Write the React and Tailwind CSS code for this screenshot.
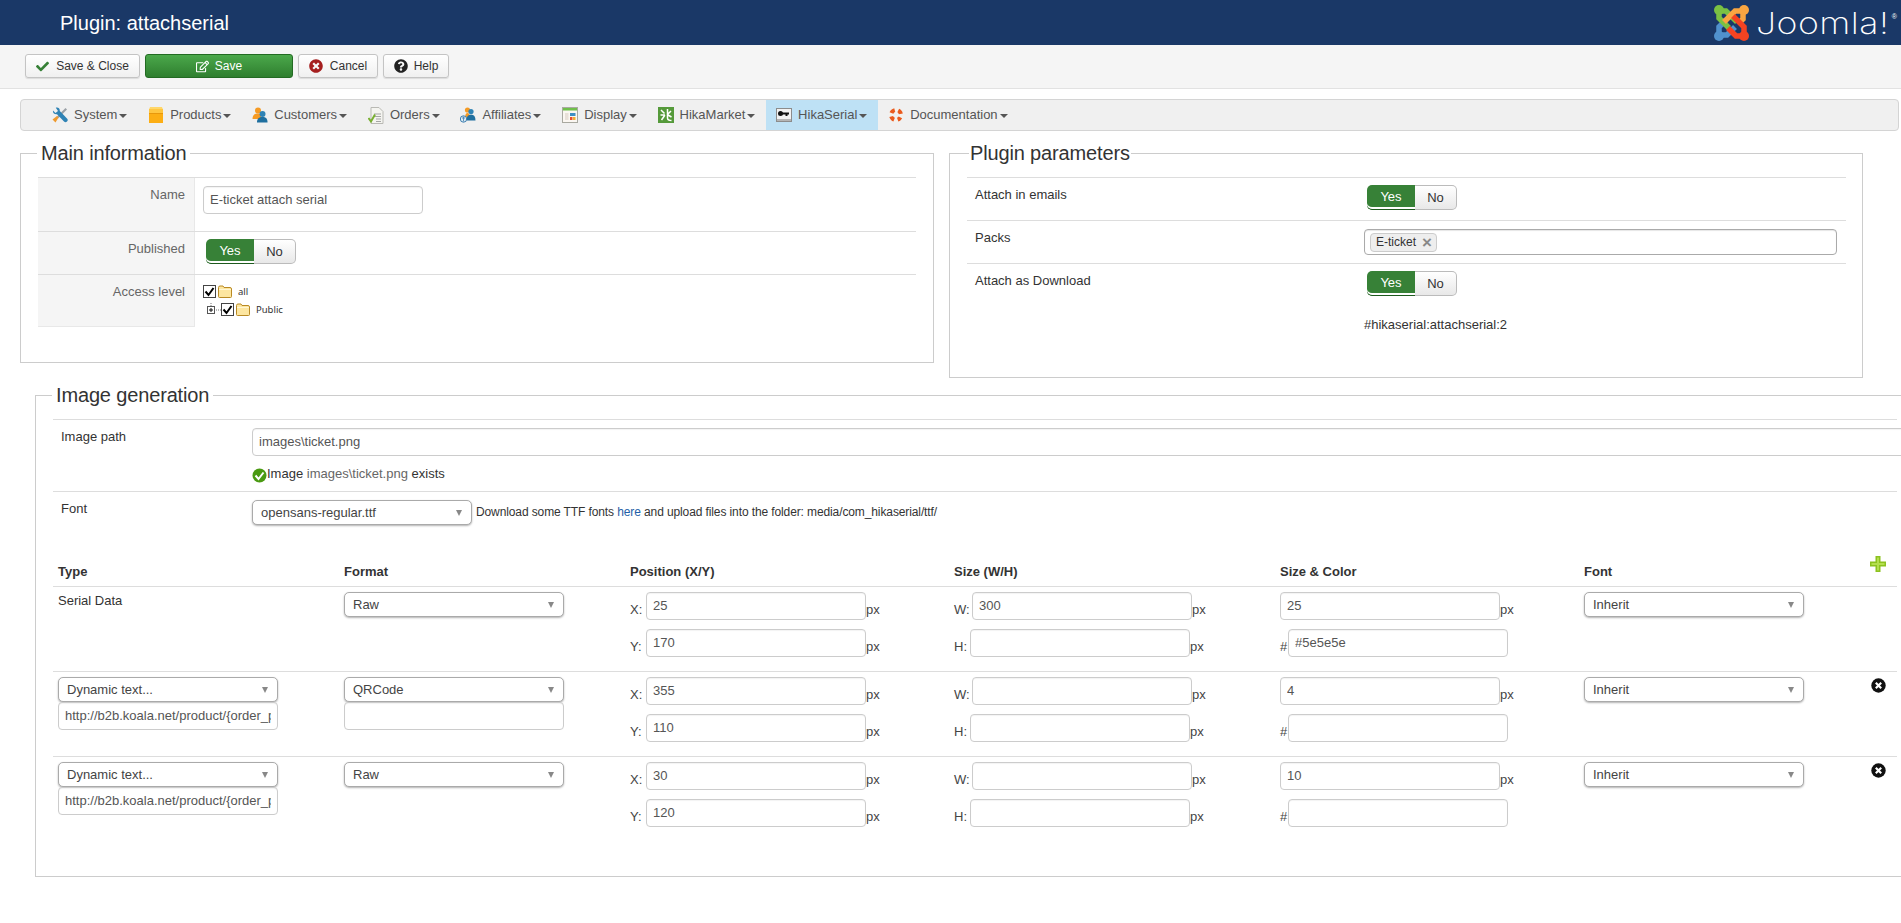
import React from 'react';
import { FaCheck, FaRegEdit, FaTimesCircle, FaQuestionCircle } from 'react-icons/fa';

const ToolsIcon = () => (
    <svg width="16" height="16" viewBox="0 0 16 16">
        <path d="M13.500 1L15 2.500 6 11.500 4.500 10z" fill="#9aa0a6" />
        <path d="M6.500 10.500L3.500 15.500 .5 12.500 5 9z" fill="#ee9a2e" />
        <path d="M1 3.500L3.500 6 6 4 3.800.8C6 0 8 1.500 7.800 4L15 11.500a2 2 0 0 1-3 3L5 7.200C2.500 7.500.5 6 1 3.500z" fill="#2f83b5" />
    </svg>
);

const BoxIcon = () => (
    <svg width="16" height="16" viewBox="0 0 16 16">
        <path d="M1 2.500L2 0h12l1 2.500z" fill="#ffd76a" />
        <rect x="1" y="2" width="14" height="14" fill="#fcae14" />
        <rect x="1" y="2" width="14" height="4" fill="#ffc640" />
        <rect x="1" y="6" width="14" height="1" fill="#e8980c" />
    </svg>
);

const CustomersIcon = () => (
    <svg width="16" height="16" viewBox="0 0 16 16">
        <circle cx="6" cy="3.500" r="3" fill="#f59a23" />
        <path d="M0.500 12c0-4 2-5.500 5.500-5.500S9 8 9 12z" fill="#f59a23" />
        <circle cx="10.500" cy="7" r="3" fill="#2f83b5" />
        <path d="M5 15.500c0-4 2-5.500 5.500-5.500s5 1.500 5 5.500z" fill="#1f6f9f" />
    </svg>
);

const OrdersIcon = () => (
    <svg width="16" height="17" viewBox="0 0 16 17">
        <path d="M3 .5h8l4 4v12H3z" fill="#f4f4f0" stroke="#b9b9b4" />
        <path d="M6 7h7M6 9.500h7M8 12h5M8 14.500h5" stroke="#a5a5a5" />
        <path d="M.5 11l2.500 3.500L7 7.500" fill="none" stroke="#79b031" strokeWidth="2" />
    </svg>
);

const AffiliatesIcon = () => (
    <svg width="16" height="16" viewBox="0 0 16 16">
        <circle cx="7.500" cy="3" r="2.600" fill="#f59a23" />
        <path d="M5 11c0-3.500 1-5 2.500-5S10 7.500 10 11z" fill="#f59a23" />
        <circle cx="11" cy="4.500" r="2.600" fill="#2f83b5" />
        <path d="M6.500 13.500c0-4 1.500-6 4.500-6s4.500 2 4.500 6z" fill="#1f6f9f" />
        <circle cx="3.500" cy="12" r="3.200" fill="#dfeaf2" stroke="#3d7fb0" />
        <path d="M3.500 9.500v5M2 11h3" stroke="#3d7fb0" strokeWidth=".8" />
    </svg>
);

const DisplayIcon = () => (
    <svg width="16" height="16" viewBox="0 0 16 16">
        <rect x=".5" y=".5" width="15" height="15" fill="#fbf7f2" stroke="#a9a9a0" />
        <rect x="1" y="1" width="14" height="2.500" fill="#6fbf4a" />
        <rect x="3" y="6" width="3.500" height="7" fill="#e8e0d8" />
        <rect x="8" y="6" width="5.500" height="3" fill="#3f8fc4" />
        <rect x="8" y="10" width="2.500" height="3" fill="#e8502d" />
        <rect x="11" y="10" width="2.500" height="3" fill="#f2b134" />
    </svg>
);

const MarketIcon = () => (
    <svg width="16" height="16" viewBox="0 0 16 16">
        <rect width="16" height="16" fill="#559a3a" />
        <path d="M3 3l3.500 3.500M2.500 8H7M7 8l-3.500 5M9.500 2v9q0 2.500 4 2.500M13 4l-3.500 3.500M10 8l3.500 2" stroke="#fff" strokeWidth="1.500" fill="none" />
    </svg>
);

const SerialIcon = () => (
    <svg width="16" height="14" viewBox="0 0 16 14">
        <rect x=".5" y=".5" width="15" height="13" fill="#f2f2f2" stroke="#8c8c8c" />
        <rect x="1" y="11" width="14" height="2" fill="#b5b5b5" />
        <circle cx="4.500" cy="5.500" r="2.500" fill="#111" />
        <path d="M6 4.500h7v2h-1.500v1.500h-2V6.500H6z" fill="#111" />
    </svg>
);

const LifebuoyIcon = () => (
    <svg width="14" height="16" viewBox="0 0 14 16">
        <circle cx="7" cy="8" r="5" fill="none" stroke="#f4f1ec" strokeWidth="4" />
        <circle cx="7" cy="8" r="5" fill="none" stroke="#ea5a1e" strokeWidth="4" strokeDasharray="4.500 3.350" strokeDashoffset="2.250" transform="rotate(45 7 8)" />
    </svg>
);

const JoomlaMark = () => (
    <svg width="36" height="36" viewBox="0 0 36 36" className="shrink-0">
        <circle cx="6" cy="31" r="5" fill="#5091cd" />
        <path d="M6 29V22L13 15M7 30H14L22 22" fill="none" stroke="#5091cd" strokeWidth="5.500" />
        <circle cx="6" cy="5" r="5" fill="#7ac143" />
        <path d="M7 6H13L24 17M6 7V13L16 23" fill="none" stroke="#7ac143" strokeWidth="5.500" />
        <circle cx="31" cy="5" r="5" fill="#f9a541" />
        <path d="M29 6H22L11 17M30 7V14L25 19" fill="none" stroke="#f9a541" strokeWidth="5.500" />
        <circle cx="31" cy="31" r="5" fill="#f44321" />
        <path d="M31 29V22L20 11M30 31H23L15 23" fill="none" stroke="#f44321" strokeWidth="5.500" />
    </svg>
);

const FolderIcon = () => (
    <svg width="14" height="13" viewBox="0 0 14 13" className="shrink-0">
        <path d="M.5 2.500q0-1.500 1.500-1.500h3l1 1.500h6q1.500 0 1.500 1.500v7.500q0 1-1 1h-11q-1 0-1-1z" fill="#fde6a0" stroke="#b98a24" />
        <path d="M1 4.500h12" stroke="#fff6d2" />
    </svg>
);

const CheckBox = () => (
    <svg width="13" height="13" viewBox="0 0 13 13" className="shrink-0">
        <rect x=".5" y=".5" width="12" height="12" fill="#fff" stroke="#444" />
        <path d="M2.500 6.500L5.500 10 10.500 3" fill="none" stroke="#000" strokeWidth="2" />
    </svg>
);

const TreePlus = () => (
    <svg width="14" height="13" viewBox="0 0 14 13" className="shrink-0">
        <path d="M4 0v3M9 7h5" stroke="#777" strokeDasharray="1 1" />
        <rect x=".5" y="3.500" width="7" height="7" fill="#fff" stroke="#555" />
        <path d="M2 7h4M4 5v4" stroke="#111" />
    </svg>
);

const PlusIcon = () => (
    <svg width="16" height="16" viewBox="0 0 16 16">
        <path d="M5.500 0h5v5.500H16v5h-5.500V16h-5v-5.500H0v-5h5.500z" fill="#8cc21f" />
        <path d="M7 1.500h2v5.500h5.500v2H9v5.500H7V9H1.500V7H7z" fill="#b4de4e" />
    </svg>
);

const Caret = () => (
    <span className="inline-block ml-[2px] w-0 h-0 border-x-[4px] border-x-transparent border-t-[4px] border-t-[#555] translate-y-[1px]" />
);

const Toggle = () => (
    <div className="flex w-[90px] h-[25px] text-[13px]">
        <span className="w-[48px] flex items-center justify-center bg-[#378137] text-white rounded-l-[5px] border-b border-[#1e5a1e] shadow-[inset_0_-2px_0_#ffffff]">Yes</span>
        <span className="w-[42px] flex items-center justify-center bg-gradient-to-b from-white to-[#e8e8e8] text-[#333] rounded-r-[5px] border border-l-0 border-[#bbb]">No</span>
    </div>
);

const Select = ({ value, width = 'w-[220px]' }) => (
    <div className={`${width} h-[25px] flex items-center justify-between pl-[8px] pr-[9px] bg-white border border-[#aaa] rounded-[5px] shadow-[0_1px_2px_rgba(0,0,0,0.3)] text-[13px] text-[#444] shrink-0`}>
        <span>{value}</span>
        <span className="w-0 h-0 border-x-[3.500px] border-x-transparent border-t-[6px] border-t-[#888]" />
    </div>
);

const Input = ({ value = '', className = 'w-[220px]' }) => (
    <input
        readOnly
        value={value}
        className={`${className} h-[28px] px-[6px] pb-[2px] bg-white border border-[#ccc] rounded-[4px] text-[13px] text-[#555] shadow-[inset_0_1px_1px_rgba(0,0,0,0.05)] outline-none shrink-0`}
    />
);

const Fieldset = ({ title, legendClass, className, children }) => (
    <fieldset className={`border border-[#ccc] shrink-0 ${className}`}>
        <legend className={`text-[20px] leading-[24px] tracking-[-0.15px] text-[#333] ${legendClass}`}>{title}</legend>
        {children}
    </fieldset>
);

const Labelled = ({ label, labelWidth, inputClass = 'w-[220px]', value }) => (
    <div className="flex items-end">
        {label && <span className={`${labelWidth} text-[13px] leading-[20px] text-[#444] shrink-0`}>{label}</span>}
        <Input value={value} className={inputClass} />
        {label !== '#' && <span className="text-[13px] leading-[20px] text-[#444]">px</span>}
    </div>
);

const menuItems = [
    { label: 'System', Icon: ToolsIcon, pad: 'pl-[31px] pr-[10.800px]' },
    { label: 'Products', Icon: BoxIcon, pad: 'pl-[10px] pr-[10.800px]' },
    { label: 'Customers', Icon: CustomersIcon, pad: 'pl-[10px] pr-[10.800px]' },
    { label: 'Orders', Icon: OrdersIcon, pad: 'pl-[10px] pr-[10.800px]' },
    { label: 'Affiliates', Icon: AffiliatesIcon, pad: 'pl-[10px] pr-[10.800px]' },
    { label: 'Display', Icon: DisplayIcon, pad: 'pl-[10px] pr-[10.800px]' },
    { label: 'HikaMarket', Icon: MarketIcon, pad: 'pl-[10px] pr-[10.800px]' },
    { label: 'HikaSerial', Icon: SerialIcon, pad: 'pl-[10px] pr-[10.800px] bg-[#bee1f5]' },
    { label: 'Documentation', Icon: LifebuoyIcon, pad: 'pl-[10px] pr-[10.800px]' },
];

const rows = [
    { type: null, format: 'Raw', x: '25', y: '170', w: '300', size: '25', color: '#5e5e5e' },
    { type: 'Dynamic text...', text: 'http://b2b.koala.net/product/{order_product_id}', format: 'QRCode', formatInput: true, x: '355', y: '110', size: '4' },
    { type: 'Dynamic text...', text: 'http://b2b.koala.net/product/{order_product_id}', format: 'Raw', x: '30', y: '120', size: '10' },
];

const cols = ['w-[286px]', 'w-[286px]', 'w-[324px]', 'w-[326px]', 'w-[304px]', 'w-[286px]'];

export default function App() {
    return (
        <div className="w-[1901px] h-[923px] overflow-hidden bg-white font-['Liberation_Sans',Arial,sans-serif] text-[13px] text-[#333]">
            <header className="h-[45px] bg-[#1a3867] flex items-center justify-between pl-[60px] pr-[4px]">
                <h1 className="text-[20px] leading-[24px] text-white">Plugin: attachserial</h1>
                <div className="flex items-center">
                    <JoomlaMark />
                    <span className="ml-[7px] w-[136px] text-[30px] leading-[36px] font-extralight text-white font-['Inter',sans-serif] tracking-[0.4px] scale-x-[1.19] origin-left">Joomla!</span>
                    <span className="text-[7px] leading-[7px] text-white self-start mt-[8px]">®</span>
                </div>
            </header>

            <div className="h-[44px] bg-[#f5f5f5] border-b border-[#e2e2e2] flex items-start gap-[5px] pl-[25px] pt-[9px] text-[12px]">
                <button className="w-[115px] h-[24px] flex items-center justify-center gap-[7px] bg-gradient-to-b from-white to-[#f0f0f0] border border-[#c4c4c4] rounded-[3px] shadow-[0_1px_1px_rgba(0,0,0,0.1)] text-[#333]">
                    <FaCheck className="text-[13px] text-[#378137]" /> Save &amp; Close
                </button>
                <button className="w-[148px] h-[24px] flex items-center justify-center gap-[6px] bg-gradient-to-b from-[#4ba84b] to-[#2f7f2f] border border-[#236b23] rounded-[3px] text-white">
                    <FaRegEdit className="text-[13px]" /> Save
                </button>
                <button className="w-[80px] h-[24px] flex items-center justify-center gap-[7px] bg-gradient-to-b from-white to-[#f0f0f0] border border-[#c4c4c4] rounded-[3px] shadow-[0_1px_1px_rgba(0,0,0,0.1)] text-[#333]">
                    <FaTimesCircle className="text-[14px] text-[#a51f1f]" /> Cancel
                </button>
                <button className="w-[66px] h-[24px] flex items-center justify-center gap-[6px] bg-gradient-to-b from-white to-[#f0f0f0] border border-[#c4c4c4] rounded-[3px] shadow-[0_1px_1px_rgba(0,0,0,0.1)] text-[#333]">
                    <FaQuestionCircle className="text-[14px] text-[#222]" /> Help
                </button>
            </div>

            <nav className="mt-[10px] ml-[20px] w-[1879px] h-[32px] flex bg-[#f0f0f0] border border-[#d4d4d4] rounded-[4px] text-[13px] text-[#555]">
                {menuItems.map(({ label, Icon, pad }) => (
                    <div key={label} className={`flex items-center ${pad}`}>
                        <span className="w-[16px] flex justify-center mr-[6px]"><Icon /></span>
                        {label}
                        <Caret />
                    </div>
                ))}
            </nav>

            <div className="flex items-start gap-[15px] ml-[20px] mt-[10px]">
                <Fieldset title="Main information" legendClass="ml-[16px] px-[4px]" className="w-[914px] h-[222px]">
                    <div className="ml-[17px] mt-[12px] w-[878px] border-b-0">
                        <div className="flex h-[54px] border-t border-[#ddd]">
                            <div className="w-[157px] bg-[#f5f5f5] border-r border-[#e8e8e8] text-right pr-[9px] pt-[8px] leading-[18px] text-[#666]">Name</div>
                            <div className="pl-[8px] pt-[8px]"><Input value="E-ticket attach serial" /></div>
                        </div>
                        <div className="flex h-[43px] border-t border-[#ddd]">
                            <div className="w-[157px] bg-[#f5f5f5] border-r border-[#e8e8e8] text-right pr-[9px] pt-[8px] leading-[18px] text-[#666]">Published</div>
                            <div className="pl-[11px] pt-[7px]"><Toggle /></div>
                        </div>
                        <div className="flex h-[53px] border-y border-[#ddd] border-b-transparent">
                            <div className="w-[157px] h-[52px] bg-[#f5f5f5] border-r border-b border-[#e8e8e8] text-right pr-[9px] pt-[8px] leading-[18px] text-[#666]">Access level</div>
                            <div className="pl-[8px] pt-[10px] font-['Noto_Sans',sans-serif] text-[9.500px] leading-[13px] text-[#333]">
                                <div className="flex items-center">
                                    <CheckBox />
                                    <span className="ml-[2px]"><FolderIcon /></span>
                                    <span className="ml-[6px]">all</span>
                                </div>
                                <div className="flex items-center mt-[5px] ml-[4px]">
                                    <TreePlus />
                                    <CheckBox />
                                    <span className="ml-[2px]"><FolderIcon /></span>
                                    <span className="ml-[6px]">Public</span>
                                </div>
                            </div>
                        </div>
                    </div>
                </Fieldset>

                <Fieldset title="Plugin parameters" legendClass="ml-[19px] px-[1px]" className="w-[914px] h-[237px]">
                    <div className="ml-[17px] mt-[12px] w-[879px]">
                        <div className="flex h-[43px] border-t border-[#ddd]">
                            <div className="w-[397px] pl-[8px] pt-[8px] leading-[18px]">Attach in emails</div>
                            <div className="pl-[3px] pt-[7px]"><Toggle /></div>
                        </div>
                        <div className="flex h-[43px] border-t border-[#ddd]">
                            <div className="w-[397px] pl-[8px] pt-[8px] leading-[18px]">Packs</div>
                            <div className="pt-[8px]">
                                <div className="w-[473px] h-[26px] flex items-center pl-[5px] border border-[#aaa] rounded-[4px] shadow-[inset_0_1px_1px_rgba(0,0,0,0.1)]">
                                    <span className="h-[19px] w-[67px] flex items-center justify-between pl-[5px] pr-[4px] bg-[#eee] border border-[#ccc] rounded-[4px] text-[12px] text-[#333]">
                                        E-ticket
                                        <span className="text-[17px] leading-[15px] font-bold text-[#888]">×</span>
                                    </span>
                                </div>
                            </div>
                        </div>
                        <div className="flex h-[43px] border-t border-[#ddd]">
                            <div className="w-[397px] pl-[8px] pt-[8px] leading-[18px]">Attach as Download</div>
                            <div className="pl-[3px] pt-[7px]"><Toggle /></div>
                        </div>
                        <div className="ml-[397px] mt-[10px] leading-[18px]">#hikaserial:attachserial:2</div>
                    </div>
                </Fieldset>
            </div>

            <Fieldset title="Image generation" legendClass="ml-[16px] px-[4px]" className="ml-[35px] mt-[5px] w-[1900px] h-[494px]">
                <div className="ml-[17px] mt-[12px] w-[1844px]">
                    <div className="flex h-[72px] border-t border-[#ddd]">
                        <div className="w-[199px] pl-[8px] pt-[8px] leading-[18px] shrink-0">Image path</div>
                        <div className="pt-[8px] shrink-0">
                            <Input value="images\ticket.png" className="w-[1700px]" />
                            <div className="mt-[9px] flex items-center leading-[18px]">
                                <svg width="15" height="15" viewBox="0 0 15 15" className="mt-[3px] shrink-0">
                                    <circle cx="7.500" cy="7.500" r="7" fill="#4a9a12" />
                                    <path d="M3.500 7.500L6.500 11 11.500 4.500" fill="none" stroke="#fff" strokeWidth="2" />
                                </svg>
                                Image&nbsp;<span className="text-[#666]">images\ticket.png</span>&nbsp;exists
                            </div>
                        </div>
                    </div>
                    <div className="flex border-t border-[#ddd] pt-[8px]">
                        <div className="w-[199px] pl-[8px] leading-[18px] shrink-0">Font</div>
                        <Select value="opensans-regular.ttf" />
                        <div className="ml-[4px] mt-[3px] text-[12px] leading-[18px] tracking-[-0.11px]">
                            Download some TTF fonts <span className="text-[#1f5fa8]">here</span> and upload files into the folder: media/com_hikaserial/ttf/
                        </div>
                    </div>

                    <div className="flex h-[31px] mt-[31px] border-b border-[#ddd] font-bold">
                        {['Type', 'Format', 'Position (X/Y)', 'Size (W/H)', 'Size & Color', 'Font'].map((head, i) => (
                            <div key={head} className={`${cols[i]} pl-[5px] pt-[6px] leading-[20px] shrink-0`}>{head}</div>
                        ))}
                        <div className="w-[33px] pl-[5px]"><PlusIcon /></div>
                    </div>

                    {rows.map((row, index) => (
                        <div key={index} className={`flex h-[85px] pt-[5px] ${index < 2 ? 'border-b border-[#ddd]' : ''}`}>
                            <div className="w-[286px] pl-[5px] shrink-0">
                                {row.type ? (
                                    <>
                                        <Select value={row.type} />
                                        <Input value={row.text} />
                                    </>
                                ) : (
                                    <div className="leading-[18px]">Serial Data</div>
                                )}
                            </div>
                            <div className="w-[286px] pl-[5px] shrink-0">
                                <Select value={row.format} />
                                {row.formatInput && <Input />}
                            </div>
                            <div className="w-[324px] pl-[5px] shrink-0 flex flex-col gap-[9px]">
                                <Labelled label="X:" labelWidth="w-[16px]" value={row.x} />
                                <Labelled label="Y:" labelWidth="w-[16px]" value={row.y} />
                            </div>
                            <div className="w-[326px] pl-[5px] shrink-0 flex flex-col gap-[9px]">
                                <Labelled label="W:" labelWidth="w-[18px]" value={row.w} />
                                <Labelled label="H:" labelWidth="w-[16px]" />
                            </div>
                            <div className="w-[304px] pl-[5px] shrink-0 flex flex-col gap-[9px]">
                                <Labelled label="" value={row.size} />
                                <Labelled label="#" labelWidth="w-[8px]" value={row.color} />
                            </div>
                            <div className="w-[286px] pl-[5px] shrink-0">
                                <Select value="Inherit" />
                            </div>
                            <div className="w-[33px] pl-[6px] pt-[1px] shrink-0">
                                {index > 0 && (
                                    <svg width="15" height="15" viewBox="0 0 15 15">
                                        <circle cx="7.500" cy="7.500" r="7.200" fill="#111" />
                                        <path d="M4.800 4.800l5.400 5.400M10.200 4.800l-5.400 5.400" stroke="#fff" strokeWidth="2.200" />
                                    </svg>
                                )}
                            </div>
                        </div>
                    ))}
                </div>
            </Fieldset>
        </div>
    );
}
